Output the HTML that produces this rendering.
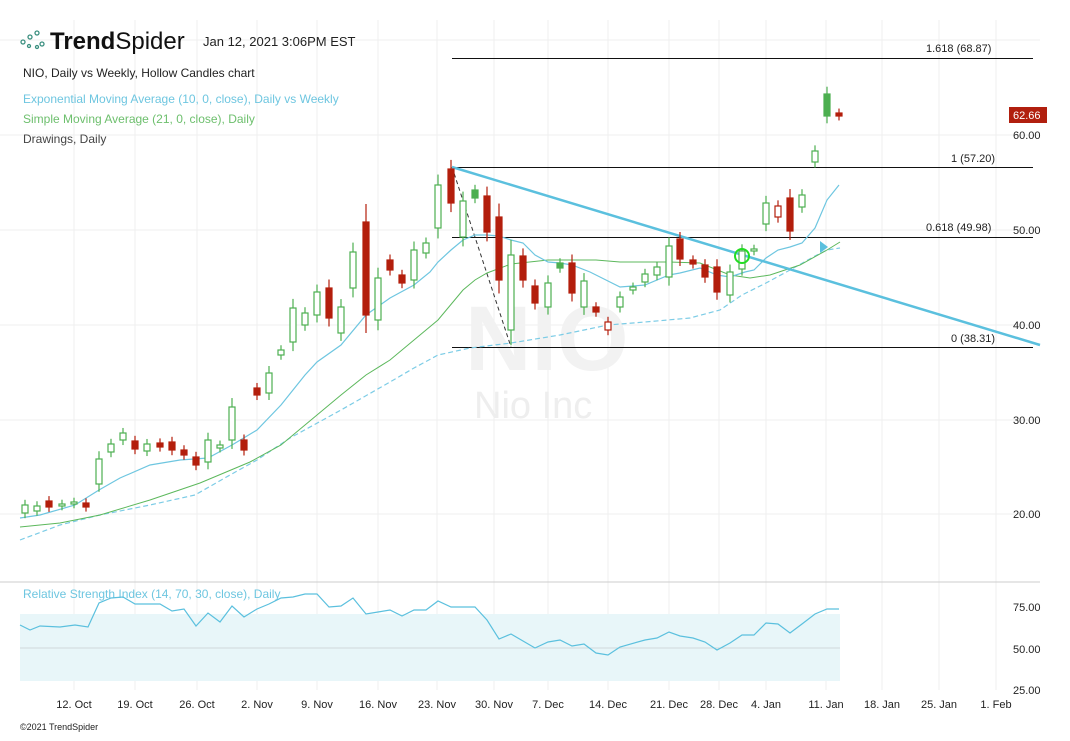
<!DOCTYPE html><html><head><style>body{margin:0;background:#fff;font-family:"Liberation Sans",sans-serif}</style></head><body>
<svg width="1070" height="736" xmlns="http://www.w3.org/2000/svg" font-family="Liberation Sans, sans-serif">
<g stroke="#efefef" stroke-width="1">
<line x1="0" y1="40" x2="1040" y2="40"/><line x1="0" y1="135" x2="1040" y2="135"/><line x1="0" y1="230" x2="1040" y2="230"/><line x1="0" y1="325" x2="1040" y2="325"/><line x1="0" y1="420" x2="1040" y2="420"/><line x1="0" y1="514" x2="1040" y2="514"/>
<line x1="74" y1="20" x2="74" y2="690"/><line x1="135" y1="20" x2="135" y2="690"/><line x1="197" y1="20" x2="197" y2="690"/><line x1="257" y1="20" x2="257" y2="690"/><line x1="317" y1="20" x2="317" y2="690"/><line x1="378" y1="20" x2="378" y2="690"/><line x1="437" y1="20" x2="437" y2="690"/><line x1="494" y1="20" x2="494" y2="690"/><line x1="548" y1="20" x2="548" y2="690"/><line x1="608" y1="20" x2="608" y2="690"/><line x1="669" y1="20" x2="669" y2="690"/><line x1="719" y1="20" x2="719" y2="690"/><line x1="766" y1="20" x2="766" y2="690"/><line x1="826" y1="20" x2="826" y2="690"/><line x1="882" y1="20" x2="882" y2="690"/><line x1="939" y1="20" x2="939" y2="690"/><line x1="996" y1="20" x2="996" y2="690"/>
</g>
<text x="465" y="370" font-size="92" font-weight="bold" fill="#f2f2f2">NIO</text>
<text x="474" y="418" font-size="38" fill="#eeeeee">Nio Inc</text>
<g fill="none" stroke="#3a8f7f" stroke-width="1.3"><circle cx="23" cy="42" r="2"/><circle cx="30" cy="37" r="2"/><circle cx="37" cy="33" r="2"/><circle cx="42" cy="44" r="2"/><circle cx="37" cy="47" r="1.5"/><circle cx="29" cy="46" r="1.5"/></g>
<text x="50" y="49" font-size="24" font-weight="bold" fill="#111">Trend<tspan font-weight="normal">Spider</tspan></text>
<text x="203" y="46" font-size="13" fill="#222">Jan 12, 2021 3:06PM EST</text>
<text x="23" y="77" font-size="12" fill="#222">NIO, Daily vs Weekly, Hollow Candles chart</text>
<text x="23" y="103" font-size="12" fill="#6ec6e0">Exponential Moving Average (10, 0, close), Daily vs Weekly</text>
<text x="23" y="123" font-size="12" fill="#6dbf6d">Simple Moving Average (21, 0, close), Daily</text>
<text x="23" y="143" font-size="12" fill="#444">Drawings, Daily</text>
<g stroke="#111" stroke-width="1"><line x1="452" y1="58.5" x2="1033" y2="58.5"/><line x1="452" y1="167.5" x2="1033" y2="167.5"/><line x1="452" y1="237.5" x2="1033" y2="237.5"/><line x1="452" y1="347.5" x2="1033" y2="347.5"/></g>
<g font-size="11" fill="#222"><text x="926" y="52">1.618 (68.87)</text><text x="951" y="162">1 (57.20)</text><text x="926" y="231">0.618 (49.98)</text><text x="951" y="342">0 (38.31)</text></g>
<g font-size="11" fill="#222"><text x="1013" y="139">60.00</text><text x="1013" y="234">50.00</text><text x="1013" y="329">40.00</text><text x="1013" y="424">30.00</text><text x="1013" y="518">20.00</text></g>
<rect x="1009" y="107" width="38" height="16" fill="#b11f0e"/><text x="1013" y="119" font-size="11" fill="#fff">62.66</text>
<line x1="452" y1="167" x2="511" y2="347" stroke="#333" stroke-dasharray="4,3"/>
<polyline fill="none" stroke="#7ccce6" stroke-width="1.2" stroke-dasharray="5,3" points="20,540 60,525 100,515 150,505 195,495 230,475 257,460 290,438 341,410 390,382 414,368 438,355 470,348 511,343 560,335 608,325 645,322 690,318 720,310 742,295 766,283 790,270 815,256 827,250 840,248"/>
<polyline fill="none" stroke="#5cb85c" stroke-width="1" points="20,527 60,523 100,515 150,500 200,483 250,462 281,445 305,425 341,395 366,375 390,360 414,340 438,320 463,290 475,280 487,273 511,264 548,260 572,260 596,260 620,262 669,262 700,263 730,275 750,278 770,275 800,265 827,250 840,242"/>
<polyline fill="none" stroke="#6ec6e0" stroke-width="1.2" points="20,518 40,515 75,505 99,490 120,478 150,465 180,460 208,458 232,445 257,430 281,405 305,375 317,362 341,345 366,315 390,298 414,285 430,272 438,262 451,250 463,240 475,235 487,235 499,236 511,240 523,243 535,255 548,262 560,263 572,265 590,272 620,287 645,285 669,275 680,273 700,268 717,275 730,277 745,272 754,270 766,258 778,250 790,247 802,243 815,228 827,200 839,185"/>
<line x1="452" y1="167" x2="1040" y2="345" stroke="#5bc0de" stroke-width="2.5"/>
<polygon points="820,241 828,247 820,253" fill="#5bc0de"/>
<g id="c" stroke-width="1.2"></g>
<circle cx="742" cy="256" r="7" fill="none" stroke="#22dd22" stroke-width="2"/>
<line x1="0" y1="582" x2="1040" y2="582" stroke="#ccc"/>
<text x="23" y="598" font-size="12" fill="#6ec6e0">Relative Strength Index (14, 70, 30, close), Daily</text>
<rect x="20" y="614" width="820" height="67" fill="#e8f6f9"/>
<line x1="20" y1="648" x2="840" y2="648" stroke="#cfd8da"/>
<g font-size="11" fill="#222"><text x="1013" y="611">75.00</text><text x="1013" y="653">50.00</text><text x="1013" y="694">25.00</text></g>
<polyline fill="none" stroke="#5bc0de" stroke-width="1.2" points="20,625 30,630 40,626 60,627 75,625 88,627 99,603 111,598 123,597 135,604 160,604 172,611 184,609 196,626 208,613 220,622 232,606 244,617 257,609 269,604 281,598 293,597 305,594 317,594 329,607 341,606 353,598 366,614 378,612 390,610 402,616 414,610 426,610 438,601 451,607 475,607 487,620 499,639 511,634 523,641 535,648 548,642 560,640 572,646 584,644 596,653 608,655 620,647 645,640 657,638 669,632 680,636 693,638 705,642 717,650 730,643 742,635 754,635 766,623 778,624 790,633 802,624 815,614 827,609 839,609"/>
<g font-size="11" fill="#222" text-anchor="middle"><text x="74" y="708">12. Oct</text><text x="135" y="708">19. Oct</text><text x="197" y="708">26. Oct</text><text x="257" y="708">2. Nov</text><text x="317" y="708">9. Nov</text><text x="378" y="708">16. Nov</text><text x="437" y="708">23. Nov</text><text x="494" y="708">30. Nov</text><text x="548" y="708">7. Dec</text><text x="608" y="708">14. Dec</text><text x="669" y="708">21. Dec</text><text x="719" y="708">28. Dec</text><text x="766" y="708">4. Jan</text><text x="826" y="708">11. Jan</text><text x="882" y="708">18. Jan</text><text x="939" y="708">25. Jan</text><text x="996" y="708">1. Feb</text></g>
<text x="20" y="730" font-size="9" fill="#222">©2021 TrendSpider</text>
</svg>
<script>
var d=[[25,505,513,'g'],[37,506,511,'g'],[49,501,507,'r'],[62,504,506,'g'],[74,502,504,'g'],[86,503,507,'r'],[99,459,484,'g'],[111,444,452,'g'],[123,433,440,'g'],[135,441,449,'r'],[147,444,451,'g'],[160,443,447,'r'],[172,442,450,'r'],[184,450,455,'r'],[196,457,465,'r'],[208,440,462,'g'],[220,445,448,'g'],[232,407,440,'g'],[244,440,450,'r'],[257,388,395,'r'],[269,373,393,'g'],[281,350,355,'g'],[293,308,342,'g'],[305,313,325,'g'],[317,292,315,'g'],[329,288,318,'r'],[341,307,333,'g'],[353,252,288,'g'],[366,222,315,'r'],[378,278,320,'g'],[390,260,270,'r'],[402,275,283,'r'],[414,250,280,'g'],[426,243,253,'g'],[438,185,228,'g'],[451,169,203,'r'],[463,201,237,'g'],[475,190,198,'G'],[487,196,232,'r'],[499,217,280,'r'],[511,255,330,'g'],[523,256,280,'r'],[535,286,303,'r'],[548,283,307,'g'],[560,263,268,'G'],[572,263,293,'r'],[584,281,307,'g'],[596,307,312,'r'],[608,322,330,'h'],[620,297,307,'g'],[633,287,290,'g'],[645,274,282,'g'],[657,267,275,'g'],[669,246,277,'g'],[680,239,259,'r'],[693,260,264,'r'],[705,265,277,'r'],[717,267,292,'r'],[730,272,295,'g'],[742,251,269,'g'],[754,249,251,'g'],[766,203,224,'g'],[778,206,217,'h'],[790,198,231,'r'],[802,195,207,'g'],[815,151,162,'g'],[827,94,116,'G'],[839,113,116,'r']];
var s='';d.forEach(function(c){var x=c[0],t=c[1],b=c[2],k=c[3];var col=(k=='r'||k=='h')?'#b31e0c':'#4caf50';var fill=(k=='r'||k=='G')?col:'#fff';var w=(b-t)*0.15+4;s+='<line x1="'+x+'" y1="'+(t-w)+'" x2="'+x+'" y2="'+(b+w)+'" stroke="'+col+'"/><rect x="'+(x-3)+'" y="'+t+'" width="6" height="'+Math.max(2,b-t)+'" fill="'+fill+'" stroke="'+col+'"/>';});
document.getElementById('c').innerHTML=s;
</script>
</body></html>
